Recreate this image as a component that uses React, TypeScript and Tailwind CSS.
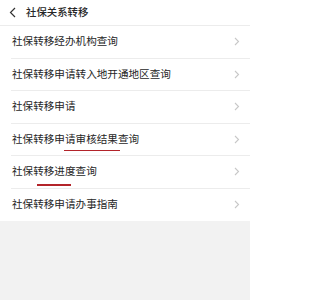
const rows = [
  '社保转移经办机构查询',
  '社保转移申请转入地开通地区查询',
  '社保转移申请',
  '社保转移申请审核结果查询',
  '社保转移进度查询',
  '社保转移申请办事指南',
]

// hand-drawn red marks in the screenshot, per row index
const marks: Record<number, string> = {
  3: 'left-[64px] w-[56px] top-[26px]',
  4: 'left-[37px] w-[34px] top-[28px]',
}

function Chevron() {
  return (
    <svg width="6" height="9" viewBox="0 0 6 9" className="shrink-0">
      <path d="M1 1l3.5 3.5L1 8" fill="none" stroke="#c8c8c8" strokeWidth="1.1" />
    </svg>
  )
}

export default function App() {
  return (
    <div
      className="min-h-[300px] w-[250px] bg-[#f2f2f2] text-[#262626]"
      style={{ fontFamily: '"Noto Sans CJK SC", "Noto Sans", sans-serif' }}
    >
      <div className="flex h-[26px] items-center border-b border-[#ececec] bg-white pl-[9px]">
        <svg width="7" height="11" viewBox="0 0 7 11" className="shrink-0">
          <path d="M6 1L1.5 5.5 6 10" fill="none" stroke="#333" strokeWidth="1.2" />
        </svg>
        <span className="ml-[10px] text-[10.4px] font-medium leading-none">社保关系转移</span>
      </div>
      <div className="bg-white">
        {rows.map((label, i) => (
          <div key={label} className="relative pl-[11px]">
            <div
              className={`flex h-[32.5px] items-center justify-between pr-[10px] pl-px ${
                i < rows.length - 1 ? 'border-b border-[#ececec]' : ''
              }`}
            >
              <span className="text-[10.6px] leading-none">{label}</span>
              <Chevron />
            </div>
            {marks[i] && <div className={`absolute h-[1.5px] bg-[#b3242a] ${marks[i]}`} />}
          </div>
        ))}
      </div>
    </div>
  )
}
